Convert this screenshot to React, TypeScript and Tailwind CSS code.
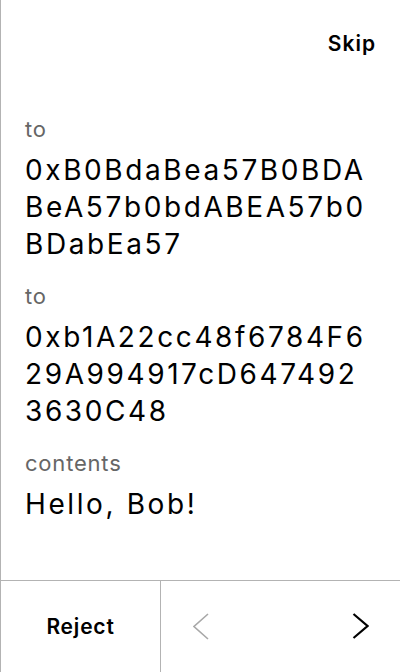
import React from "react";

const font = { fontFamily: "Inter, 'Noto Sans', sans-serif" };

function Field({ label, value }: { label: string; value: string }) {
  return (
    <div className="flex flex-col">
      <div className="text-[22px] leading-[28px] tracking-[0.8px] text-[#666666]">{label}</div>
      <div className="mt-[9px] text-[28px] leading-[37px] tracking-[2.6px] text-black break-all">{value}</div>
    </div>
  );
}

export default function App() {
  return (
    <div className="w-[400px] h-[672px] bg-white border-l border-[#b3b3b3] flex flex-col" style={font}>
      <div className="flex justify-end px-6 pt-[30px]">
        <button className="text-[21px] leading-[28px] tracking-[1px] font-semibold text-black">Skip</button>
      </div>
      <div className="flex-1 flex flex-col gap-[19px] px-6 pt-[57px]">
        <Field label="to" value="0xB0BdaBea57B0BDABeA57b0bdABEA57b0BDabEa57" />
        <Field label="to" value="0xb1A22cc48f6784F629A994917cD6474923630C48" />
        <Field label="contents" value="Hello, Bob!" />
      </div>
      <div className="h-[92px] border-t border-[#b3b3b3] flex">
        <button className="w-[160px] border-r border-[#b3b3b3] flex items-center justify-center text-[21px] tracking-[0.8px] font-semibold text-black">
          Reject
        </button>
        <div className="flex-1 flex items-center justify-between">
          <button className="w-[80px] h-full flex items-center justify-center">
            <svg width="16" height="27" viewBox="0 0 16 27" fill="none">
              <polyline points="15,1 1,13.5 15,26" stroke="#a8a8a8" strokeWidth="1.6" fill="none" />
            </svg>
          </button>
          <button className="w-[80px] h-full flex items-center justify-center">
            <svg width="17" height="27" viewBox="0 0 17 27" fill="none">
              <polyline points="1.5,1 15.5,13 1.5,25" stroke="#000" strokeWidth="2.2" fill="none" />
            </svg>
          </button>
        </div>
      </div>
    </div>
  );
}
